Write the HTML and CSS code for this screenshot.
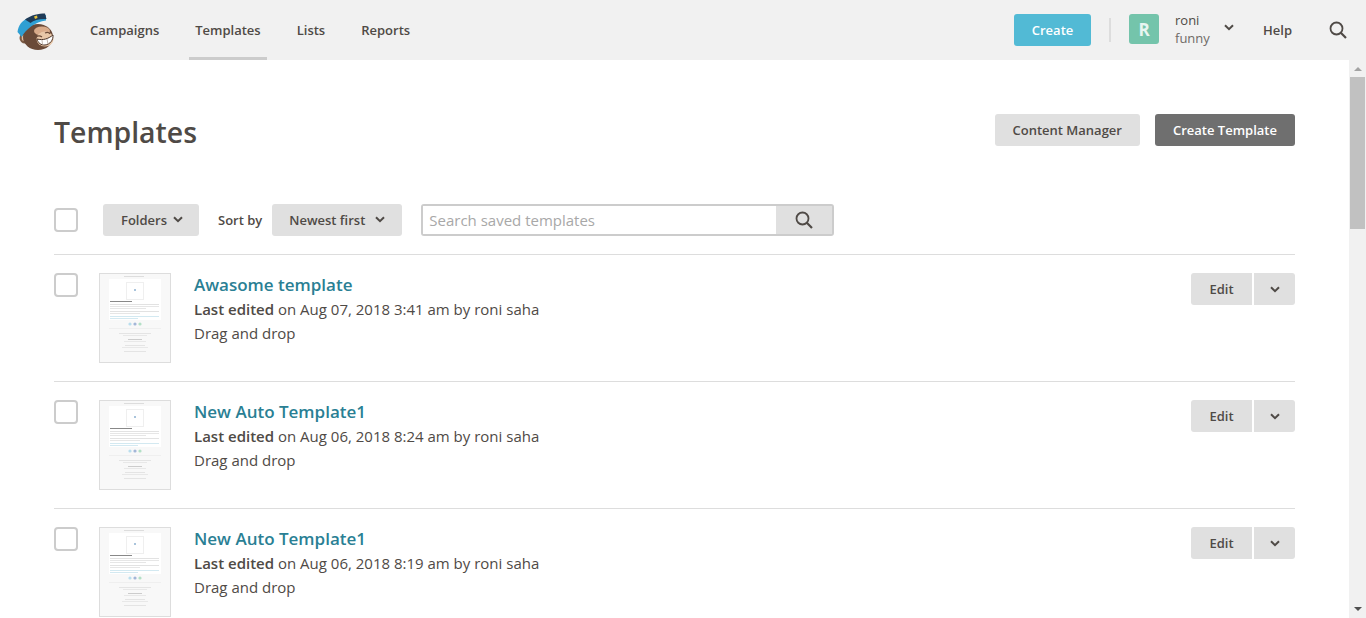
FILE: index.html
```html
<!DOCTYPE html>
<html lang="en">
<head>
  <meta charset="UTF-8">
  <meta name="viewport" content="width=device-width, initial-scale=1.0">
  <title>Templates</title>
  <link rel="stylesheet" href="styles.css">
</head>
<body>
  <!-- shared icons -->
  <svg class="defs" width="0" height="0">
    <filter id="soft">
      <feGaussianBlur stdDeviation="0.3"/>
    </filter>
    <symbol id="chevron" viewBox="0 0 10 7">
      <path d="M1 1.2l4 4 4-4" fill="none" stroke="currentColor" stroke-width="2"/>
    </symbol>
    <symbol id="search" viewBox="0 0 18 18">
      <circle cx="7.5" cy="7.5" r="6" fill="none" stroke="currentColor" stroke-width="1.8"/>
      <path d="M11.8 11.8l5.2 5.2" fill="none" stroke="currentColor" stroke-width="2.2"/>
    </symbol>
    <symbol id="thumb" viewBox="0 0 70 88">
      <rect width="70" height="88" fill="#f8f8f8"/>
      <g filter="url(#soft)">
        <rect x="24" y="2" width="20" height="1" fill="#ddd"/>
        <rect x="9" y="5" width="52" height="41" fill="#fff"/>
        <rect x="26.500" y="8.500" width="17" height="17" fill="#fff" stroke="#efefef"/>
        <rect x="34" y="15" width="2" height="2" fill="#a9c4dc"/>
        <rect x="10" y="27" width="22" height="1" fill="#888"/>
        <rect x="10" y="30" width="49" height="1" fill="#e2e2e2"/>
        <rect x="10" y="32" width="49" height="1" fill="#e6e6e6"/>
        <rect x="10" y="34" width="36" height="1" fill="#e6e6e6"/>
        <rect x="10" y="37" width="49" height="1" fill="#e2e2e2"/>
        <rect x="10" y="39" width="30" height="1" fill="#e6e6e6"/>
        <rect x="10" y="42" width="49" height="1" fill="#d3e9f1"/>
        <rect x="10" y="44" width="28" height="1" fill="#d3e9f1"/>
        <circle cx="30" cy="50" r="1.600" fill="#b9deee"/>
        <circle cx="35" cy="50" r="1.600" fill="#a3b6d8"/>
        <circle cx="40" cy="50" r="1.600" fill="#b3e0c6"/>
        <rect x="9" y="54" width="52" height="1" fill="#efefef"/>
        <rect x="19" y="59" width="32" height="1" fill="#e4e4e4"/>
        <rect x="23" y="61" width="24" height="1" fill="#e8e8e8"/>
        <rect x="28" y="65" width="14" height="1" fill="#ccc"/>
        <rect x="24" y="67" width="22" height="1" fill="#e8e8e8"/>
        <rect x="25" y="71" width="20" height="1" fill="#e4e4e4"/>
        <rect x="22" y="73" width="26" height="1" fill="#e8e8e8"/>
        <rect x="24" y="77" width="22" height="1" fill="#e4e4e4"/>
      </g>
    </symbol>
  </svg>

  <header class="topbar">
    <a class="logo" href="#">
      <svg width="40" height="40" viewBox="0 0 40 40">
        <circle cx="8" cy="26" r="5.500" fill="#7a5a45"/>
        <circle cx="8" cy="26" r="3.300" fill="#e3bd9c"/>
        <ellipse cx="21" cy="25" rx="15" ry="13" fill="#6a4a38"/>
        <ellipse cx="25" cy="19" rx="8" ry="4.500" fill="#d9ab8a"/>
        <ellipse cx="28" cy="27" rx="8.500" ry="7.500" fill="#e8c7a8"/>
        <path d="M19 25c2-1.500 4-1.500 6 0M28 21c2-1 4-.5 5 1" fill="none" stroke="#6a4a38" stroke-width="1.200"/>
        <path d="M20 27c6 1.500 11 0 16-4 .5 5-3 9.500-8 10-4 .3-7-2-8-6z" fill="#fff" stroke="#4c3428"/>
        <path d="M25 28l.5 4.500M30 27l1 5" stroke="#a8988c" stroke-width=".7"/>
        <path d="M.5 20C1.500 13 5 9 10 6.500L29 3v5.500C18 10 9 17 4.700 25z" fill="#2f9fd3"/>
        <path d="M8 7.500C14 3 22 1.500 28 1.500L29.500 7C23 6.500 17 8 13.500 11z" fill="#1f3b57"/>
        <path d="M17 4.500l3-1 .5 2.500-2.500 1z" fill="#e8c33c"/>
      </svg>
    </a>
    <nav class="mainnav">
      <a href="#">Campaigns</a>
      <a class="active" href="#">Templates</a>
      <a href="#">Lists</a>
      <a href="#">Reports</a>
    </nav>
    <div class="account">
      <a class="btn btn-create" href="#">Create</a>
      <span class="divider"></span>
      <span class="avatar">R</span>
      <div class="username">
        <span class="name">roni</span>
        <span class="org">funny</span>
      </div>
      <svg class="user-chevron" width="10" height="7"><use href="#chevron"/></svg>
      <a class="help" href="#">Help</a>
      <svg class="top-search" width="18" height="18"><use href="#search"/></svg>
    </div>
  </header>

  <div class="page">
    <main class="content">
      <div class="title-row">
        <h1>Templates</h1>
        <div class="title-actions">
          <a class="btn" href="#">Content Manager</a>
          <a class="btn btn-dark" href="#">Create Template</a>
        </div>
      </div>

      <div class="toolbar">
        <span class="check"></span>
        <a class="btn btn-folders" href="#">Folders
          <svg width="10" height="7"><use href="#chevron"/></svg>
        </a>
        <span class="sort-label">Sort by</span>
        <a class="btn btn-sort" href="#">Newest first
          <svg width="10" height="7"><use href="#chevron"/></svg>
        </a>
        <div class="searchbox">
          <input type="text" placeholder="Search saved templates">
          <span class="search-btn"><svg width="18" height="18"><use href="#search"/></svg></span>
        </div>
      </div>

      <ul class="templates">
        <li class="row">
          <span class="check"></span>
          <svg class="thumb" width="72" height="90"><use href="#thumb"/></svg>
          <div class="info">
            <a class="tpl-name" href="#">Awasome template</a>
            <p><b>Last edited</b> on Aug 07, 2018 3:41 am by roni saha</p>
            <p>Drag and drop</p>
          </div>
          <div class="split">
            <a class="btn btn-edit" href="#">Edit</a>
            <a class="btn btn-more" href="#"><svg width="10" height="7"><use href="#chevron"/></svg></a>
          </div>
        </li>
        <li class="row">
          <span class="check"></span>
          <svg class="thumb" width="72" height="90"><use href="#thumb"/></svg>
          <div class="info">
            <a class="tpl-name" href="#">New Auto Template1</a>
            <p><b>Last edited</b> on Aug 06, 2018 8:24 am by roni saha</p>
            <p>Drag and drop</p>
          </div>
          <div class="split">
            <a class="btn btn-edit" href="#">Edit</a>
            <a class="btn btn-more" href="#"><svg width="10" height="7"><use href="#chevron"/></svg></a>
          </div>
        </li>
        <li class="row">
          <span class="check"></span>
          <svg class="thumb" width="72" height="90"><use href="#thumb"/></svg>
          <div class="info">
            <a class="tpl-name" href="#">New Auto Template1</a>
            <p><b>Last edited</b> on Aug 06, 2018 8:19 am by roni saha</p>
            <p>Drag and drop</p>
          </div>
          <div class="split">
            <a class="btn btn-edit" href="#">Edit</a>
            <a class="btn btn-more" href="#"><svg width="10" height="7"><use href="#chevron"/></svg></a>
          </div>
        </li>
      </ul>
    </main>

    <!-- scrollbar -->
    <div class="scrollbar">
      <span class="arrow arrow-up"></span>
      <span class="thumb-bar"></span>
      <span class="arrow arrow-down"></span>
    </div>
  </div>
</body>
</html>
```

FILE: styles.css
```css
* {
  box-sizing: border-box;
}

html,
body {
  height: 100%;
}

body {
  margin: 0;
  overflow: hidden;
  display: flex;
  flex-direction: column;
  font-family: "Open Sans", sans-serif;
  color: #4f4a46;
  background-color: #fff;
}

a {
  color: inherit;
  text-decoration: none;
}

.defs {
  position: absolute;
}

/* Top bar */
.topbar {
  display: flex;
  align-items: center;
  height: 60px;
  flex-shrink: 0;
  padding-left: 17px;
  padding-right: 19px;
  background-color: #f1f1f1;
}

.logo {
  display: flex;
  width: 40px;
  height: 40px;
  margin-top: 3px;
}

.mainnav {
  display: flex;
  height: 60px;
  margin-left: 27px;
  gap: 24px;
}

.mainnav a {
  display: flex;
  align-items: center;
  height: 60px;
  padding: 3px 6px 0;
  font-size: 13px;
  font-weight: 600;
  border-bottom: 3px solid transparent;
}

.mainnav a.active {
  border-bottom-color: #ccc;
}

.account {
  display: flex;
  align-items: center;
  margin-left: auto;
}

.btn {
  display: inline-flex;
  align-items: center;
  justify-content: center;
  height: 32px;
  padding: 0 18px;
  border-radius: 3px;
  font-size: 13px;
  font-weight: 600;
  background-color: #e0e0e0;
}

.btn-create {
  width: 77px;
  padding: 0;
  color: #fff;
  background-color: #52bad5;
}

.divider {
  width: 2px;
  height: 24px;
  margin-left: 18px;
  background-color: #ddd;
}

.avatar {
  display: flex;
  align-items: center;
  justify-content: center;
  width: 30px;
  height: 30px;
  margin-left: 18px;
  margin-bottom: 2px;
  border-radius: 3px;
  font-size: 17px;
  font-weight: 700;
  color: #e8f6f1;
  background-color: #74c4ab;
}

.username {
  display: flex;
  flex-direction: column;
  width: 49px;
  margin-left: 16px;
  margin-bottom: 2px;
  font-size: 13px;
  line-height: 18px;
}

.org {
  color: #6f6a66;
}

.user-chevron {
  margin-bottom: 6px;
}

.help {
  margin-left: 29px;
  font-size: 13px;
  font-weight: 600;
}

.top-search {
  margin-left: 37px;
  margin-bottom: 1px;
}

/* Page */
.page {
  display: flex;
  flex: 1;
  min-height: 0;
}

.content {
  flex: 1;
  min-width: 0;
  overflow: hidden;
  padding: 54px 54px 0;
}

.title-row {
  display: flex;
  justify-content: space-between;
  align-items: flex-start;
  height: 90px;
}

h1 {
  margin: 0;
  font-size: 28.4px;
  font-weight: 600;
  line-height: 36px;
}

.title-actions {
  display: flex;
  gap: 15px;
}

.btn-dark {
  color: #fff;
  background-color: #6f6f6f;
}

.toolbar {
  display: flex;
  align-items: center;
  height: 51px;
  padding-bottom: 19px;
  border-bottom: 1px solid #ddd;
}

.check {
  display: block;
  flex-shrink: 0;
  width: 24px;
  height: 24px;
  border: 2px solid #ccc;
  border-radius: 4px;
  background-color: #fff;
}

.btn svg {
  margin-left: 6px;
}

.btn-folders {
  width: 96px;
  margin-left: 25px;
  padding: 0 0 0 2px;
}

.sort-label {
  margin-left: 19px;
  font-size: 13px;
  font-weight: 600;
}

.btn-sort {
  width: 130px;
  margin-left: 10px;
  padding: 0;
}

.btn-sort svg {
  margin-left: 10px;
}

.searchbox {
  display: flex;
  width: 413px;
  height: 32px;
  margin-left: 19px;
  border: 2px solid #ccc;
  border-radius: 3px;
}

.searchbox input {
  flex: 1;
  min-width: 0;
  padding: 0 6px;
  border: 0;
  outline: 0;
  font-family: inherit;
  font-size: 15px;
}

.searchbox input::placeholder {
  color: #a8a8a8;
  opacity: 1;
}

.search-btn {
  display: flex;
  align-items: center;
  justify-content: center;
  width: 56px;
  background-color: #e0e0e0;
}

/* Template list */
.templates {
  margin: 0;
  padding: 0;
  list-style: none;
}

.row {
  display: flex;
  align-items: flex-start;
  height: 127px;
  padding-top: 18px;
  border-bottom: 1px solid #ddd;
}

.thumb {
  flex-shrink: 0;
  margin-left: 21px;
  border: 1px solid #ddd;
}

.info {
  flex: 1;
  margin-left: 23px;
  font-size: 15px;
  line-height: 24px;
}

.info p {
  margin: 0;
}

.info b {
  font-weight: 600;
}

.tpl-name {
  display: block;
  font-size: 17px;
  font-weight: 600;
  color: #2a7f94;
}

.split {
  display: flex;
  gap: 2px;
}

.btn-edit {
  width: 61px;
  padding: 0;
  border-radius: 3px 0 0 3px;
}

.btn-more {
  width: 41px;
  padding: 0;
  border-radius: 0 3px 3px 0;
}

.btn-more svg {
  margin-left: 0;
}

/* Scrollbar */
.scrollbar {
  display: flex;
  flex-direction: column;
  align-items: center;
  flex-shrink: 0;
  width: 17px;
  background-color: #f1f1f1;
}

.thumb-bar {
  width: 15px;
  height: 152px;
  margin-top: 6px;
  background-color: #c1c1c1;
}

.arrow {
  width: 0;
  height: 0;
  border-left: 4px solid transparent;
  border-right: 4px solid transparent;
}

.arrow-up {
  margin-top: 7px;
  border-bottom: 4px solid #a3a3a3;
}

.arrow-down {
  margin-top: auto;
  margin-bottom: 7px;
  border-top: 4px solid #505050;
}
```
